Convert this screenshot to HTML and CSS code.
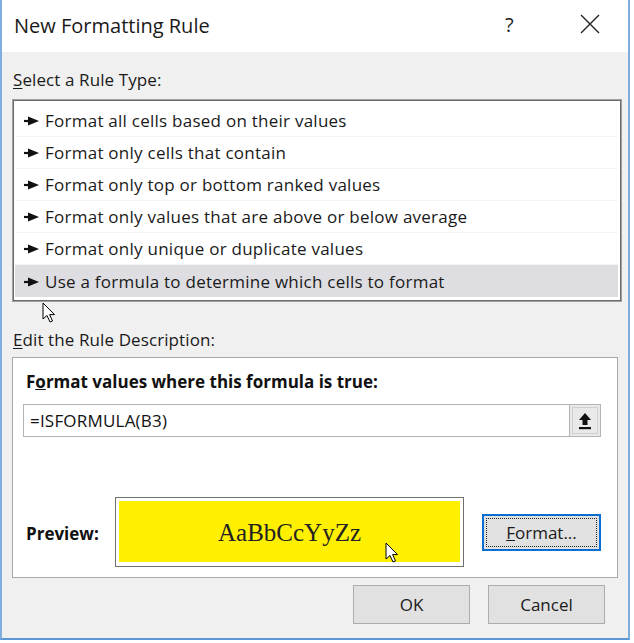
FILE: index.html
```html
<!DOCTYPE html>
<html>
<head>
<meta charset="utf-8">
<link rel="stylesheet" href="styles.css">
</head>
<body>
<div class="window">
  <div class="titlebar">
    <div class="title">New Formatting Rule</div>
    <div class="help">?</div>
    <div class="close">
      <svg width="20" height="20" viewBox="0 0 20 20"><path d="M1 1 L19 19 M19 1 L1 19" stroke="#222" stroke-width="1.4" fill="none"/></svg>
    </div>
  </div>
  <div class="content">
    <div class="label label-first"><u>S</u>elect a Rule Type:</div>
    <div class="listbox">
      <div class="row"><span class="arrow"><svg width="15" height="10" viewBox="0 0 15 10"><path d="M0 5 H6" stroke="#111" stroke-width="2.2"/><path d="M4 0.5 L15 5 L4 9.5 Z" fill="#111"/></svg></span>Format all cells based on their values</div>
      <div class="row"><span class="arrow"><svg width="15" height="10" viewBox="0 0 15 10"><path d="M0 5 H6" stroke="#111" stroke-width="2.2"/><path d="M4 0.5 L15 5 L4 9.5 Z" fill="#111"/></svg></span>Format only cells that contain</div>
      <div class="row"><span class="arrow"><svg width="15" height="10" viewBox="0 0 15 10"><path d="M0 5 H6" stroke="#111" stroke-width="2.2"/><path d="M4 0.5 L15 5 L4 9.5 Z" fill="#111"/></svg></span>Format only top or bottom ranked values</div>
      <div class="row"><span class="arrow"><svg width="15" height="10" viewBox="0 0 15 10"><path d="M0 5 H6" stroke="#111" stroke-width="2.2"/><path d="M4 0.5 L15 5 L4 9.5 Z" fill="#111"/></svg></span>Format only values that are above or below average</div>
      <div class="row"><span class="arrow"><svg width="15" height="10" viewBox="0 0 15 10"><path d="M0 5 H6" stroke="#111" stroke-width="2.2"/><path d="M4 0.5 L15 5 L4 9.5 Z" fill="#111"/></svg></span>Format only unique or duplicate values</div>
      <div class="row selected"><span class="arrow"><svg width="15" height="10" viewBox="0 0 15 10"><path d="M0 5 H6" stroke="#111" stroke-width="2.2"/><path d="M4 0.5 L15 5 L4 9.5 Z" fill="#111"/></svg></span>Use a formula to determine which cells to format</div>
    </div>
    <div class="label label-second"><u>E</u>dit the Rule Description:</div>
    <div class="panel">
      <div class="bold-label">F<u>o</u>rmat values where this formula is true:</div>
      <div class="inputrow">
        <div class="input">=ISFORMULA(B3)</div>
        <div class="collapse">
          <svg width="14" height="18" viewBox="0 0 14 18"><path d="M7 1 L13 8 H9.5 V13 H4.5 V8 H1 Z" fill="#111"/><rect x="1" y="15" width="12" height="2.2" fill="#111"/></svg>
        </div>
      </div>
      <div class="previewrow">
        <div class="bold-label preview-label">Preview:</div>
        <div class="preview"><div class="preview-fill">AaBbCcYyZz</div></div>
        <div class="btn format-btn"><span class="focus"><u>F</u>ormat...</span></div>
      </div>
    </div>
    <div class="buttons">
      <div class="btn dlg-btn">OK</div>
      <div class="btn dlg-btn">Cancel</div>
    </div>
  </div>
  <svg class="cursor cursor-1" width="14" height="22" viewBox="0 0 14 22"><path d="M1 1 V17 L5 13.5 L8 20 L10.5 19 L7.6 12.6 L12.5 12.6 Z" fill="#fff" stroke="#000" stroke-width="1"/></svg>
  <svg class="cursor cursor-2" width="14" height="22" viewBox="0 0 14 22"><path d="M1 1 V17 L5 13.5 L8 20 L10.5 19 L7.6 12.6 L12.5 12.6 Z" fill="#fff" stroke="#000" stroke-width="1"/></svg>
</div>
</body>
</html>
```

FILE: styles.css
```css
* { box-sizing: border-box; }
html, body { margin: 0; padding: 0; background: #ffffff; }
body {
  font-family: "Open Sans", "Noto Sans", sans-serif;
  color: #111;
  width: 634px;
  height: 643px;
  overflow: hidden;
}
.window {
  position: relative;
  width: 630px;
  height: 640px;
  border-left: 2px solid #7eaedc;
  border-right: 2px solid #7eaedc;
  border-bottom: 2px solid #5b97d3;
  background: #f0f0f0;
}
.titlebar {
  height: 52px;
  background: #ffffff;
  display: flex;
  align-items: center;
  padding-left: 12px;
}
.title {
  font-size: 20px;
  color: #1a1a1a;
  flex: 1;
  padding-bottom: 2px;
}
.help {
  font-size: 20px;
  color: #222;
  width: 20px;
  margin-right: 55px;
  padding-bottom: 4px;
}
.close {
  width: 20px;
  height: 20px;
  margin-right: 28px;
  margin-bottom: 4px;
}
.close svg { display: block; }
.content {
  padding: 0 0 0 10px;
}
.label {
  font-size: 17px;
  letter-spacing: 0.1px;
  height: 24px;
  line-height: 24px;
  color: #1a1a1a;
  padding-left: 1px;
}
.label u { text-decoration-thickness: 1px; text-underline-offset: 2px; }
.label-first { margin-top: 16px; }
.label-second { margin-top: 26px; }
.listbox {
  margin-top: 7px;
  width: 610px;
  height: 203px;
  background: #ffffff;
  border: 1px solid #a0a0a0;
  box-shadow: inset 1px 1px 0 #6a6a6a, inset -1px -1px 0 #6a6a6a;
  padding: 5px 3px 2px 2px;
}
.row {
  height: 32px;
  display: flex;
  align-items: center;
  font-size: 17px;
  letter-spacing: 0.25px;
  color: #1a1a1a;
  padding-left: 9px;
  border-bottom: 1px solid #f4f4f4;
}
.row.selected {
  background: #dedee2;
  border-bottom: none;
}
.arrow {
  display: flex;
  width: 21px;
  padding-top: 1px;
}
.panel {
  margin-top: 5px;
  width: 606px;
  height: 221px;
  background: #ffffff;
  border: 1px solid #a8a8a8;
  padding: 12px 16px 0 10px;
}
.bold-label {
  font-weight: 700;
  font-size: 17px;
  height: 24px;
  line-height: 24px;
  padding-left: 3px;
  color: #111;
}
.inputrow {
  margin-top: 10px;
  display: flex;
  height: 33px;
  border: 1px solid #b4b4b4;
  width: 578px;
}
.input {
  flex: 1;
  font-size: 17px;
  letter-spacing: 0.2px;
  line-height: 31px;
  padding-left: 6px;
  color: #111;
  background: #fff;
}
.collapse {
  width: 31px;
  background: #e9e9e9;
  border-left: 1px solid #b4b4b4;
  box-shadow: inset 0 0 0 2px #e9e9e9, inset 0 0 0 3px #d0d0d0;
  display: flex;
  align-items: center;
  justify-content: center;
}
.previewrow {
  margin-top: 60px;
  display: flex;
  align-items: center;
  height: 70px;
}
.preview-label {
  width: 92px;
  padding-top: 2px;
}
.preview {
  width: 349px;
  height: 70px;
  border: 1px solid #707070;
  background: #ffffff;
  padding: 3px 3px 4px 3px;
}
.preview-fill {
  height: 100%;
  background: #fff000;
  display: flex;
  align-items: center;
  justify-content: center;
  font-family: "Liberation Serif", "Times New Roman", serif;
  font-size: 25px;
  color: #222;
  padding-top: 3px;
}
.btn {
  background: #e1e1e1;
  border: 1px solid #adadad;
  display: flex;
  align-items: center;
  justify-content: center;
  font-size: 17px;
  color: #1a1a1a;
}
.format-btn {
  margin-left: 18px;
  width: 119px;
  height: 37px;
  border: 2px solid #0a6fd0;
  padding: 2px;
}
.focus {
  width: 100%;
  height: 100%;
  border: 1px dotted #222;
  display: flex;
  align-items: center;
  justify-content: center;
}
.buttons {
  display: flex;
  justify-content: flex-end;
  gap: 18px;
  margin-top: 7px;
  padding-right: 23px;
}
.dlg-btn {
  width: 117px;
  height: 39px;
}
.cursor {
  position: absolute;
  display: block;
}
.cursor-1 { left: 40px; top: 302px; }
.cursor-2 { left: 383px; top: 542px; }
```
